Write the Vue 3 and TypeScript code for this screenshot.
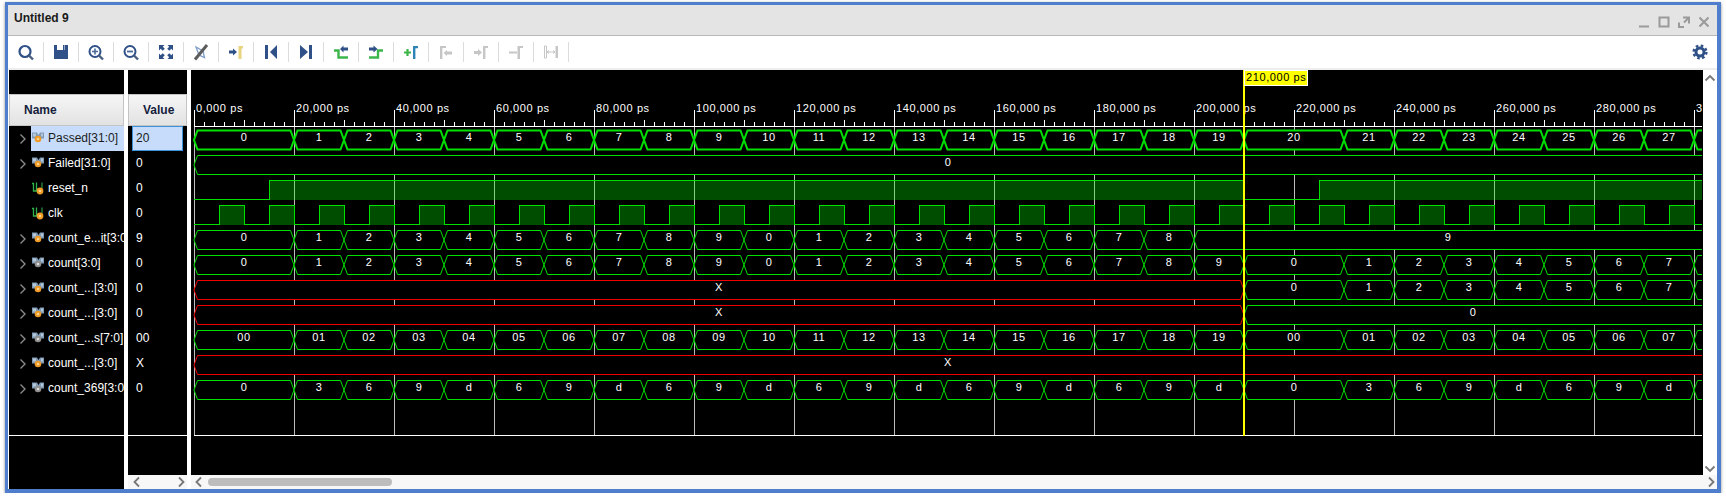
<template>
  <div class="window">
    <div class="title-bar">
      <span class="title">Untitled 9</span>
      <div class="win-buttons">
        <svg width="20" height="20" viewBox="0 0 20 20"><path d="M5 14.5H15" /></svg>
        <svg width="20" height="20" viewBox="0 0 20 20"><path d="M5.5 5.5H14.5V14.5H5.5Z" /></svg>
        <svg width="20" height="20" viewBox="0 0 20 20"><path d="M9 5.5H15V11.5M14.5 6L10 10.5M5 10.5V15H10" /></svg>
        <svg width="20" height="20" viewBox="0 0 20 20"><path d="M5.5 5.5L14.5 14.5M14.5 5.5L5.5 14.5" /></svg>
      </div>
    </div>

    <div class="toolbar">
      <div v-for="(tool, i) in tools" :key="i" class="tool">
        <svg width="20" height="20" viewBox="0 0 20 20">
          <path
            v-for="(s, j) in tool"
            :key="j"
            :d="s.d"
            :fill="s.stroke ? 'none' : s.fill"
            :stroke="s.stroke"
            :stroke-width="s.sw"
          />
        </svg>
      </div>
      <svg class="gear" width="16" height="16" viewBox="0 0 16 16">
        <circle cx="8" cy="8" r="4" fill="none" stroke="#2f5187" stroke-width="3" />
        <circle cx="8" cy="8" r="6.4" fill="none" stroke="#2f5187" stroke-width="2.4" stroke-dasharray="2.6 2.42" />
      </svg>
    </div>

    <div class="panes">
      <div class="col name-col">
        <div class="col-top"></div>
        <div class="col-head name-head">Name</div>
        <div class="list">
          <div v-for="(sig, i) in signals" :key="i" class="row">
            <div class="chev-slot">
              <svg v-if="sig.bus" width="8" height="12" viewBox="0 0 8 12">
                <path d="M1.5 1.5L6 6L1.5 10.5" fill="none" stroke="#8a8a8a" stroke-width="1.4" />
              </svg>
            </div>
            <div class="name-cell" :class="{ selected: i === 0 }">
              <svg v-if="sig.bus" class="sig-icon" width="13" height="13" viewBox="0 0 13 13">
                <path d="M0 0.5H5L6.5 3L8 0.5H12V6.5H9L6.5 5L4 6.5H0Z" fill="#7f9ab5" />
                <path d="M1 1.5H4V4.5H1ZM9 1.5H11V4.5H9Z" fill="#b5c6d6" />
                <circle cx="6" cy="7" r="3.3" :fill="sig.dot === 'gray' ? '#8f8f8f' : '#ee9a26'" />
                <circle cx="6" cy="7" r="1.3" :fill="sig.dot === 'gray' ? '#dcdcdc' : '#fbd38a'" />
              </svg>
              <svg v-else class="sig-icon" width="13" height="13" viewBox="0 0 13 13">
                <path d="M0 1.5H1.5V9H4.5V0.5" fill="none" stroke="#2eb34a" stroke-width="1.3" />
                <path d="M10 0.5V6" fill="none" stroke="#2a8c40" stroke-width="1.3" />
                <circle cx="8" cy="9" r="3.4" fill="#ee9a26" />
                <circle cx="8" cy="9" r="1.3" fill="#fbd38a" />
              </svg>
              <span class="sig-name">{{ sig.name }}</span>
            </div>
          </div>
        </div>
      </div>

      <div class="col value-col">
        <div class="col-top"></div>
        <div class="col-head value-head">Value</div>
        <div class="list value-list">
          <div v-for="(sig, i) in signals" :key="i" class="value-cell" :class="{ selected: i === 0 }">
            {{ sig.value }}
          </div>
        </div>
        <div class="spacer"></div>
        <div class="hscroll value-scroll">
          <svg width="8" height="12" viewBox="0 0 8 12"><path d="M6 1.5L1.5 6L6 10.5" class="arrow" /></svg>
          <svg width="8" height="12" viewBox="0 0 8 12"><path d="M2 1.5L6.5 6L2 10.5" class="arrow" /></svg>
        </div>
      </div>

      <div class="wave-col">
        <div class="wave-top">
          <svg class="wave" width="1512" height="405" viewBox="191 70 1512 405">
            <defs>
              <clipPath id="wave-clip"><rect x="190" y="70" width="1512" height="405" /></clipPath>
            </defs>
            <g clip-path="url(#wave-clip)">
              <!-- ruler -->
              <path :d="minorTicks" stroke="#fff" stroke-width="1" shape-rendering="crispEdges" />
              <path :d="majorTicks" stroke="#fff" stroke-width="1" shape-rendering="crispEdges" />
              <path :d="gridLines" stroke="#bdbdbd" stroke-width="1" shape-rendering="crispEdges" />
              <path d="M194 126.5H1702M194 435.5H1702" stroke="#fff" stroke-width="1" shape-rendering="crispEdges" />
              <text v-for="t in rulerLabels" :key="t.text" :x="t.x" y="112" class="wave-text">{{ t.text }}</text>

              <!-- scalar signals -->
              <path
                v-for="w in digital"
                :key="w.key + 'f'"
                :d="w.fill"
                fill="rgba(0, 255, 0, 0.3)"
                shape-rendering="crispEdges"
              />
              <path
                v-for="w in digital"
                :key="w.key"
                :d="w.line"
                fill="none"
                stroke="#00e000"
                stroke-width="1"
                shape-rendering="crispEdges"
              />

              <!-- buses -->
              <g v-for="(seg, i) in segments" :key="i">
                <path
                  :d="seg.d"
                  fill="#000"
                  :stroke="seg.red ? '#f00000' : '#00e000'"
                  :stroke-width="seg.thick ? 2 : 1"
                />
                <text v-if="seg.visible" :x="seg.cx" :y="seg.ty" class="wave-text" text-anchor="middle">{{ seg.label }}</text>
              </g>
            </g>

            <!-- cursor -->
            <rect x="1243" y="70" width="2" height="366" fill="#ffff00" />
            <rect x="1244.5" y="70.5" width="63" height="15" fill="#ffff00" stroke="#fff" stroke-width="1" />
            <text x="1246" y="81" class="wave-text cursor-label">210,000 ps</text>
          </svg>
          <div class="vscroll">
            <svg width="12" height="8" viewBox="0 0 12 8"><path d="M1.5 6.5L6 2L10.5 6.5" class="arrow" /></svg>
            <svg width="12" height="8" viewBox="0 0 12 8"><path d="M1.5 1.5L6 6L10.5 1.5" class="arrow" /></svg>
          </div>
        </div>
        <div class="hscroll wave-scroll">
          <svg width="8" height="12" viewBox="0 0 8 12"><path d="M6 1.5L1.5 6L6 10.5" class="arrow" /></svg>
          <div class="thumb"></div>
          <svg class="scroll-end" width="8" height="12" viewBox="0 0 8 12"><path d="M2 1.5L6.5 6L2 10.5" class="arrow" /></svg>
        </div>
      </div>
    </div>
  </div>
</template>

<script setup lang="ts">
interface Shape {
  d: string
  fill?: string
  stroke?: string
  sw?: number
}

interface Signal {
  name: string
  value: string
  bus: boolean
  dot?: 'gray' | 'orange'
}

interface Seg {
  label: string
  from: number
  to: number
  red?: boolean
}

const NAVY = '#2f5187'
const GREEN = '#3cb54a'
const OFF = '#c6c6c6'

// x pixel positions: 5px per 1000 ps, first tick at 194
const X0 = 194
const XEND = 1702
const CURSOR = 1244

const ring = 'M14.5 9.5A5.5 5.5 0 1 1 3.5 9.5A5.5 5.5 0 1 1 14.5 9.5Z'
const handle = { d: 'M13 13.5L17 17.5', stroke: '#4a5f80', sw: 2.4 }

const tools: Shape[][] = [
  [{ d: ring, stroke: NAVY, sw: 2.2 }, handle],
  [{ d: 'M3 3H6V8H12V3H13.5V8H14V3H17V17H3Z', fill: NAVY }],
  [{ d: ring, stroke: NAVY, sw: 2 }, handle, { d: 'M6 9.5H12M9 6.5V12.5', stroke: '#4a6a9a', sw: 1.6 }],
  [{ d: ring, stroke: NAVY, sw: 2 }, handle, { d: 'M6 9.5H12', stroke: '#4a6a9a', sw: 1.8 }],
  [
    {
      d: 'M3 3H8.5L6.8 4.7L8.8 6.7L6.7 8.8L4.7 6.8L3 8.5ZM17 3H11.5L13.2 4.7L11.2 6.7L13.3 8.8L15.3 6.8L17 8.5ZM3 17H8.5L6.8 15.3L8.8 13.3L6.7 11.2L4.7 13.2L3 11.5ZM17 17H11.5L13.2 15.3L11.2 13.3L13.3 11.2L15.3 13.2L17 11.5Z',
      fill: NAVY,
    },
  ],
  [
    { d: 'M5 5L12 9L13.5 15.5L8 13Z', stroke: '#7d9cc8', sw: 1.3 },
    { d: 'M4 17.5L16 3', stroke: '#5c5c5c', sw: 3 },
  ],
  [
    { d: 'M3 8.5H7V6.5L11 10L7 13.5V11.5H3Z', fill: NAVY },
    { d: 'M12.5 17V4H17V6.5H15.5V17Z', fill: '#e8d37f' },
  ],
  [{ d: 'M4 3H7V17H4ZM16 3V17L9 10Z', fill: NAVY }],
  [{ d: 'M4 3L12 10L4 17ZM13 3H16V17H13Z', fill: NAVY }],
  [
    { d: 'M3 8.5H7.5V15.5H17', stroke: GREEN, sw: 2.4 },
    { d: 'M9 7L12.5 3.5V5.5H17V8.5H12.5V10.5Z', fill: NAVY },
  ],
  [
    { d: 'M3 15.5H12V8.5H17', stroke: GREEN, sw: 2.4 },
    { d: 'M3 5.5H7.5V3.5L11.5 7L7.5 10.5V8.5H3Z', fill: NAVY },
  ],
  [
    { d: 'M3 10.5H10M6.5 7V14', stroke: GREEN, sw: 2.2 },
    { d: 'M12 17V4H17V6.2H14.4V17Z', fill: '#2e83b7' },
  ],
  [
    { d: 'M4 17V4H10V6H6.4V17Z', fill: OFF },
    { d: 'M7.5 11L11 8V9.5H16V12.5H11V14Z', fill: OFF },
  ],
  [
    { d: 'M3 9H7V7L11 10.5L7 14V12H3Z', fill: OFF },
    { d: 'M12 17V4H17V6H14.4V17Z', fill: OFF },
  ],
  [
    { d: 'M3 10.5H11', stroke: OFF, sw: 2 },
    { d: 'M11.5 17V4H17V6H14V17Z', fill: OFF },
  ],
  [
    { d: 'M3.5 4H5.5V16H3.5Z', stroke: OFF, sw: 1 },
    { d: 'M14.5 4H17V16H14.5Z', fill: OFF },
    { d: 'M6 10H14M6 10L8 8.5M6 10L8 11.5M14 10L12 8.5M14 10L12 11.5', stroke: OFF, sw: 1 },
  ],
]

const signals: Signal[] = [
  { name: 'Passed[31:0]', value: '20', bus: true, dot: 'orange' },
  { name: 'Failed[31:0]', value: '0', bus: true, dot: 'orange' },
  { name: 'reset_n', value: '0', bus: false },
  { name: 'clk', value: '0', bus: false },
  { name: 'count_e...it[3:0]', value: '9', bus: true, dot: 'orange' },
  { name: 'count[3:0]', value: '0', bus: true, dot: 'gray' },
  { name: 'count_...[3:0]', value: '0', bus: true, dot: 'orange' },
  { name: 'count_...[3:0]', value: '0', bus: true, dot: 'orange' },
  { name: 'count_...s[7:0]', value: '00', bus: true, dot: 'gray' },
  { name: 'count_...[3:0]', value: 'X', bus: true, dot: 'orange' },
  { name: 'count_369[3:0]', value: '0', bus: true, dot: 'gray' },
]

// first value lasts two clock periods, the rest one period each
function bus(labels: string[], start: number): Seg[] {
  const out: Seg[] = []
  let x = start
  labels.forEach((label, i) => {
    const w = i === 0 ? 100 : 50
    out.push({ label, from: x, to: x + w })
    x += w
  })
  return out
}

const nums = (from: number, n: number, pad = 0) =>
  Array.from({ length: n }, (_, i) => String(from + i).padStart(pad, '0'))
const counter = (n: number) => Array.from({ length: n }, (_, i) => String(i % 10))
const by3 = (n: number) => {
  const head = ['0', '3']
  const loop = ['6', '9', 'd']
  return Array.from({ length: n }, (_, i) => (i < 2 ? head[i] : loop[(i - 2) % 3]))
}

const busRows: Record<number, Seg[]> = {
  0: [...bus(nums(0, 20), X0), ...bus(nums(20, 9), CURSOR)],
  1: [{ label: '0', from: X0, to: XEND }],
  4: [...bus(counter(19), X0), { label: '9', from: 1194, to: XEND }],
  5: [...bus(counter(20), X0), ...bus(counter(9), CURSOR)],
  6: [{ label: 'X', from: X0, to: CURSOR, red: true }, ...bus(counter(9), CURSOR)],
  7: [{ label: 'X', from: X0, to: CURSOR, red: true }, { label: '0', from: CURSOR, to: XEND }],
  8: [...bus(nums(0, 20, 2), X0), ...bus(nums(0, 9, 2), CURSOR)],
  9: [{ label: 'X', from: X0, to: XEND, red: true }],
  10: [...bus(by3(20), X0), ...bus(by3(9), CURSOR)],
}

const rowTop = (i: number) => 130.5 + 25 * i

const segments = Object.entries(busRows).flatMap(([key, segs]) => {
  const row = Number(key)
  const top = rowTop(row)
  const bot = top + 19
  const mid = top + 9.5
  return segs.map((s) => {
    // to === XEND means the value runs off the right edge, no closing tip
    const s1 = s.to === XEND ? 1730 : s.to
    return {
      label: s.label,
      red: s.red,
      thick: row === 0,
      visible: s.to <= XEND,
      cx: (s.from + s.to) / 2,
      ty: top + 10.5,
      d: `M${s.from} ${mid}L${s.from + 3.5} ${top}H${s1 - 3.5}L${s1} ${mid}L${s1 - 3.5} ${bot}H${s.from + 3.5}Z`,
    }
  })
})

// scalar wave from a list of edge positions, starting low
function digitalWave(row: number, edges: number[], key: string) {
  const hi = rowTop(row)
  const lo = hi + 19
  let line = `M${X0} ${lo}`
  let fill = ''
  let high = false
  edges.concat(XEND).forEach((x, i, all) => {
    line += `H${x}`
    if (i < all.length - 1) {
      high = !high
      line += `V${high ? hi : lo}`
      if (high) fill += `M${x} ${hi}H${all[i + 1]}V${lo}H${x}Z`
    }
  })
  return { key, line, fill }
}

const clkEdges: number[] = []
for (let x = 219; x < XEND; x += 25) clkEdges.push(x)

const digital = [
  digitalWave(2, [269, CURSOR, 1319], 'reset'),
  digitalWave(3, clkEdges, 'clk'),
]

const majors = Array.from({ length: 16 }, (_, i) => X0 + i * 100)
const gridLines = majors.map((x) => `M${x + 0.5} 126V435`).join('')
const majorTicks = majors.map((x) => `M${x + 0.5} 110V126`).join('')

let minors = ''
for (let x = X0 + 10; x < XEND; x += 10) {
  if ((x - X0) % 100 === 0) continue
  minors += `M${x + 0.5} ${(x - X0) % 50 === 0 ? 120 : 122}V126`
}
const minorTicks = minors

const rulerLabels = majors.map((x, i) => ({
  x: x + 2,
  text: `${i * 20},000 ps`,
}))
</script>

<style>
html,
body {
  margin: 0;
  background: #fff;
}
</style>

<style scoped>
.window {
  box-sizing: border-box;
  display: flex;
  flex-direction: column;
  width: 1716px;
  height: 491px;
  margin: 2px 0 0 5px;
  border-style: solid;
  border-color: #4f7fcc;
  border-width: 3px 4px 4px 3px;
  background: #fff;
  box-shadow: 0 1px 3px rgba(0, 0, 0, 0.45);
  font-family: "Liberation Sans", Arial, sans-serif;
}

.title-bar {
  display: flex;
  align-items: center;
  justify-content: space-between;
  height: 30px;
  padding: 0 3px 0 6px;
  background: #e4e4e4;
  border-bottom: 1px solid #b8b8b8;
}

.title {
  font-size: 12px;
  font-weight: bold;
  color: #1a1a1a;
  margin-top: -4px;
}

.win-buttons {
  display: flex;
  margin-top: 3px;
}

.win-buttons path {
  fill: none;
  stroke: #9a9a9a;
  stroke-width: 2;
}

.toolbar {
  display: flex;
  align-items: center;
  height: 32px;
  padding: 0 9px 0 1px;
  border-bottom: 2px solid #eeeeee;
  background: #fff;
}

.tool {
  display: flex;
  align-items: center;
  justify-content: center;
  width: 34px;
  height: 20px;
  border-right: 1px solid #dcdcdc;
}

.gear {
  margin-left: auto;
}

.panes {
  display: flex;
  flex: 1;
  min-height: 0;
  padding-left: 1px;
  background: #fff;
}

.col {
  display: flex;
  flex-direction: column;
  background: #000;
}

.name-col {
  width: 115px;
}

.value-col {
  width: 59px;
  margin-left: 4px;
}

.col-top {
  height: 24px;
}

.col-head {
  box-sizing: border-box;
  display: flex;
  align-items: center;
  height: 32px;
  font-size: 12px;
  font-weight: bold;
  color: #14213d;
  background: linear-gradient(#f6f6f6, #e2e2e2);
  border: 1px solid #c4c4c4;
}

.name-head {
  padding-left: 14px;
}

.value-head {
  padding-left: 14px;
}

.list {
  box-sizing: content-box;
  height: 309px;
  border-bottom: 1px solid #fff;
}

.row {
  display: flex;
  height: 25px;
}

.chev-slot {
  display: flex;
  align-items: center;
  flex: none;
  width: 22px;
  padding-left: 10px;
  box-sizing: border-box;
}

.name-cell {
  display: flex;
  align-items: center;
  flex: 1;
  min-width: 0;
  padding-left: 1px;
  color: #fff;
  font-size: 12px;
  white-space: nowrap;
  overflow: hidden;
}

.name-cell.selected {
  background: #c6dcfa;
  color: #1c1c1c;
}

.sig-icon {
  flex: none;
  margin-right: 3px;
}

.sig-name {
  margin-top: -2px;
}

.value-list {
  padding: 0 4px;
}

.value-cell {
  box-sizing: border-box;
  display: flex;
  align-items: center;
  height: 25px;
  padding: 0 0 2px 3px;
  border: 1px solid transparent;
  font-size: 12px;
  color: #fff;
}

.value-cell.selected {
  background: #c6dcfa;
  border-color: #3c92d8;
  color: #1c1c1c;
}

.spacer {
  flex: 1;
}

.hscroll {
  display: flex;
  align-items: center;
  flex: none;
  height: 14px;
  background: #f7f7f7;
  box-sizing: border-box;
}

.value-scroll {
  justify-content: space-between;
  padding: 0 2px 0 5px;
}

.arrow {
  fill: none;
  stroke: #777;
  stroke-width: 1.8;
}

.wave-col {
  display: flex;
  flex-direction: column;
  width: 1526px;
  margin-left: 4px;
}

.wave-top {
  display: flex;
  flex: 1;
  min-height: 0;
}

.wave {
  display: block;
  flex: none;
  background: #000;
}

.vscroll {
  display: flex;
  flex-direction: column;
  justify-content: space-between;
  align-items: center;
  flex: 1;
  padding: 4px 0 2px;
  box-sizing: border-box;
  background: #fff;
}

.wave-scroll {
  padding: 0 2px 0 4px;
}

.thumb {
  width: 184px;
  height: 8px;
  margin-left: 5px;
  border-radius: 4px;
  background: #bdbdbd;
}

.scroll-end {
  margin-left: auto;
}

.wave-text {
  font-family: "Liberation Sans", Arial, sans-serif;
  font-size: 11px;
  letter-spacing: 0.6px;
  fill: #fff;
}

.cursor-label {
  fill: #000;
}
</style>
